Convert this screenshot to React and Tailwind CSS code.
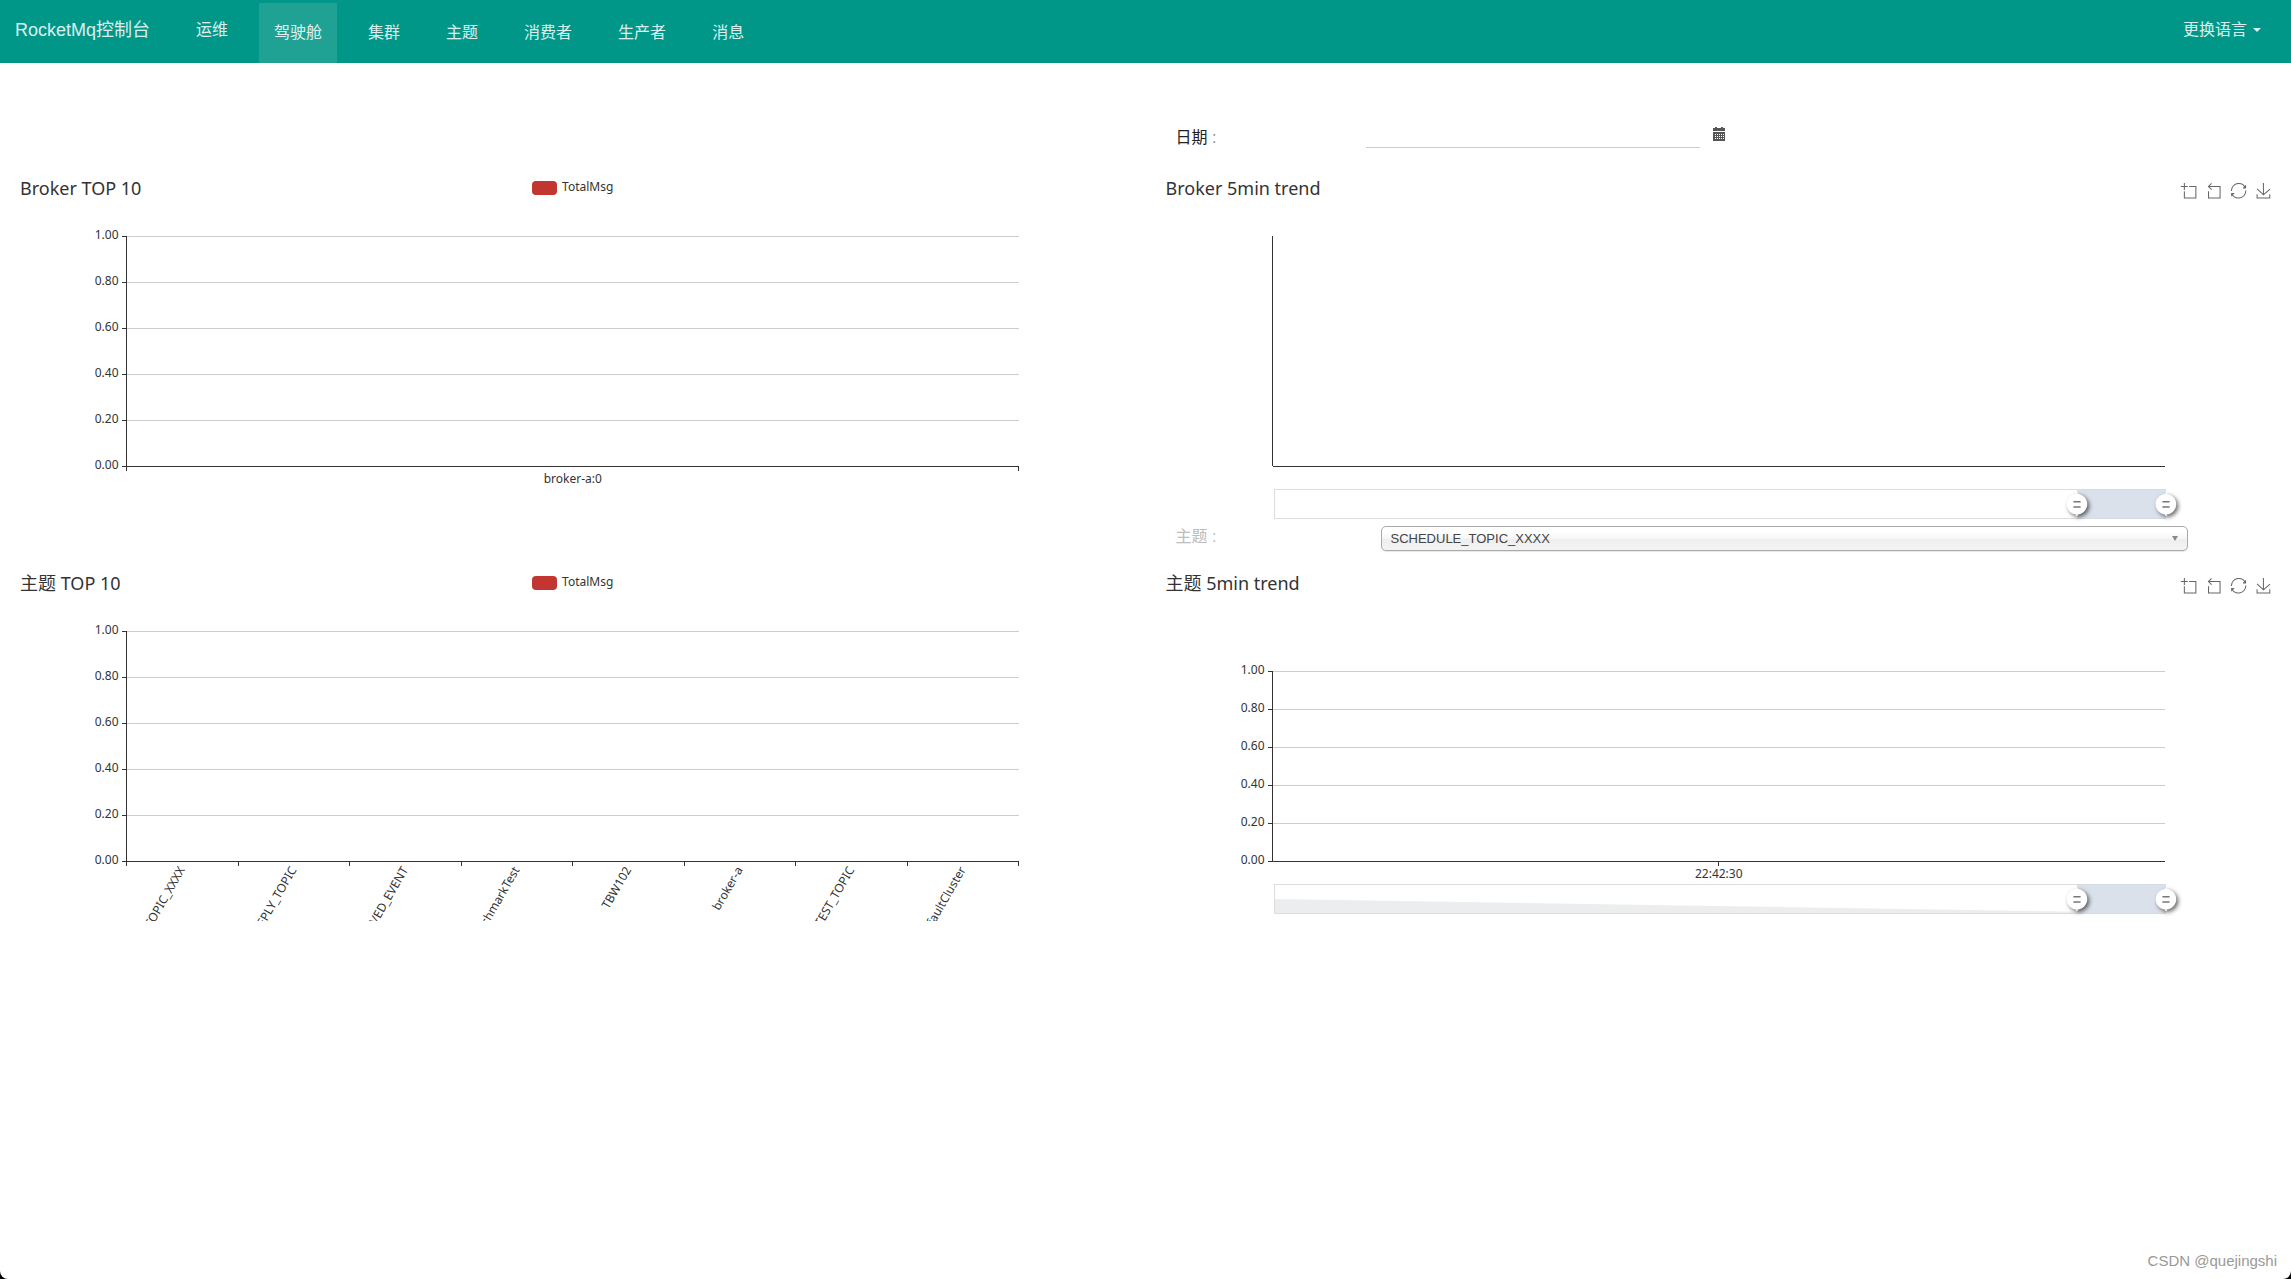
import { useState } from "react";

const NAV = ["驾驶舱", "集群", "主题", "消费者", "生产者", "消息"];
const TOPICS = [
  "SCHEDULE_TOPIC_XXXX",
  "DefaultCluster_REPLY_TOPIC",
  "OFFSET_MOVED_EVENT",
  "BenchmarkTest",
  "TBW102",
  "broker-a",
  "SELF_TEST_TOPIC",
  "DefaultCluster",
];
const TICKS = ["1.00", "0.80", "0.60", "0.40", "0.20", "0.00"];

const TOOLS = [
  ["区域缩放", "M0,13.5h26.9 M13.5,26.9V0 M32.1,13.5H58V58H13.5 V32.1"],
  ["区域缩放还原", "M22,1.4L9.9,13.5l12.3,12.3 M10.3,13.5H54.9v44.6 H10.3v-26"],
  [
    "还原",
    "M47,18.9h9.8V8.7 M56.3,20.1 C52.1,9,40.5,0.6,26.8,2.1C12.6,3.7,1.6,16.2,2.1,30.6 M13,41.1H3.1v10.2 M3.7,39.9c4.2,11.1,15.8,19.5,29.5,18 c14.2-1.6,25.2-14.1,24.7-28.5",
  ],
  [
    "保存为图片",
    "M4.7,22.9L29.3,45.5L54.7,23.4M4.6,43.6L4.6,58L53.8,58L53.8,43.6M29.2,45.1L29.2,0",
  ],
];

function Toolbox() {
  return (
    <div className="flex gap-2.5">
      {TOOLS.map(([label, d]) => (
        <button key={label} type="button" aria-label={label} className="block cursor-pointer">
          <svg viewBox="1 0 57 58" className="block size-[15px] overflow-visible fill-none stroke-[#666] stroke-[4]">
            <path d={d} />
          </svg>
        </button>
      ))}
    </div>
  );
}

function Legend() {
  return (
    <button type="button" className="flex cursor-pointer items-start gap-[5px] text-xs leading-3 text-[#333]">
      <span className="h-3.5 w-[25px] rounded bg-[#c23531]" />
      TotalMsg
    </button>
  );
}

/* Axes and grid lines; top and height are measured inside the 350px canvas. */
function Axes({ top, height, ticks = TICKS, bands = 0, labels = [], rotate = false }) {
  const bottom = top + height;
  const step = height / 5;
  return (
    <svg className="block h-full w-full overflow-hidden fill-[#333] text-xs" aria-hidden="true">
      <g className="stroke-[#ccc]" shapeRendering="crispEdges">
        {ticks.slice(0, -1).map((t, i) => (
          <line key={t} x1="10%" x2="90%" y1={top + i * step} y2={top + i * step} />
        ))}
      </g>
      <g className="stroke-[#333]" shapeRendering="crispEdges">
        <line x1="10%" x2="10%" y1={top} y2={bottom} />
        <line x1="10%" x2="90%" y1={bottom} y2={bottom} />
        {ticks.map((t, i) => (
          <svg key={t} x="10%" y={top + i * step} overflow="visible">
            <line x1="-5" x2="0" y1="0" y2="0" />
          </svg>
        ))}
        {bands > 0 &&
          Array.from({ length: bands + 1 }, (_, i) => {
            const x = `${10 + (80 / bands) * i}%`;
            return <line key={i} x1={x} x2={x} y1={bottom} y2={bottom + 5} />;
          })}
        {!bands && labels.length > 0 && <line x1="50%" x2="50%" y1={bottom} y2={bottom + 5} />}
      </g>
      {ticks.map((t, i) => (
        <svg key={t} x="10%" y={top + i * step} overflow="visible">
          <text x="-8" y="3" textAnchor="end">
            {t}
          </text>
        </svg>
      ))}
      {labels.map((l, i) => (
        <svg key={l} x={`${10 + (80 / labels.length) * (i + 0.5)}%`} y={bottom} overflow="visible">
          {rotate ? (
            <text x="-6" y="7" textAnchor="end" transform="rotate(-60)">
              {l}
            </text>
          ) : (
            <text y="17" textAnchor="middle">
              {l}
            </text>
          )}
        </svg>
      ))}
    </svg>
  );
}

function Handle({ value }) {
  return (
    <svg
      viewBox="0 10 20 22"
      className="pointer-events-none absolute top-[3px] h-6 w-[22px] -translate-x-1/2 overflow-visible drop-shadow-[2px_2px_2px_rgba(0,0,0,0.6)]"
      style={{ left: `${value}%` }}
    >
      <path
        className="fill-white"
        d="M10.7,11.9v-1.3H9.3v1.3c-4.9,0.3-8.8,4.4-8.8,9.4c0,5,3.9,9.1,8.8,9.4v1.3h1.3v-1.3c4.9-0.3,8.8-4.4,8.8-9.4C19.5,16.3,15.6,12.2,10.7,11.9z"
      />
      <path className="fill-[#777]" d="M13.3,24.4H6.7V23h6.6V24.4z M13.3,19.6H6.7v-1.4h6.6V19.6z" />
    </svg>
  );
}

const RANGE =
  "pointer-events-none absolute -left-2.5 top-0 h-full w-[calc(100%+20px)] cursor-ew-resize appearance-none opacity-0 [&::-webkit-slider-thumb]:pointer-events-auto [&::-webkit-slider-thumb]:size-5";

function DataZoom({ name, trend = false }) {
  const [start, setStart] = useState(90);
  const [end, setEnd] = useState(100);
  return (
    <div className="relative h-[30px] w-full">
      <div className="relative h-full w-full overflow-hidden border border-[#ddd]">
        {trend && (
          <svg viewBox="0 0 100 28" preserveAspectRatio="none" className="block h-full w-full">
            <polygon points="0,14 100,28 0,28" className="fill-[#ecedee]" />
          </svg>
        )}
      </div>
      <div
        className="absolute inset-y-0 border-y border-[#d2dbe6] bg-[#dae1eb]"
        style={{ left: `${start}%`, right: `${100 - end}%` }}
      />
      <Handle value={start} />
      <Handle value={end} />
      <input
        type="range"
        aria-label={`${name} start`}
        className={RANGE}
        value={start}
        onChange={(e) => setStart(Math.min(+e.target.value, end))}
      />
      <input
        type="range"
        aria-label={`${name} end`}
        className={RANGE}
        value={end}
        onChange={(e) => setEnd(Math.max(+e.target.value, start))}
      />
    </div>
  );
}

function Chart({ title, legend, toolbox, zoom, children }) {
  return (
    <section className="relative mx-[15px] h-[350px] font-['Noto_Sans','Noto_Sans_CJK_SC',sans-serif]">
      {children}
      <div className="absolute inset-x-0 top-0 grid grid-cols-[1fr_auto_1fr] items-start px-[5px] pt-[5px]">
        <h2 className="text-lg leading-[14px] text-[#333]">{title}</h2>
        <div>{legend && <Legend />}</div>
        <div className="flex justify-end pt-[2px]">{toolbox && <Toolbox />}</div>
      </div>
      {zoom && (
        <div className="absolute bottom-[7px] left-[calc(10%+2px)] right-[calc(10%-2px)]">{zoom}</div>
      )}
    </section>
  );
}

function Header() {
  return (
    <header className="flex h-[63px] items-start justify-between bg-[#009688] px-[15px] text-base leading-6 text-white/85">
      <nav className="flex items-start gap-4">
        <a href="#home" className="pr-[15px] pt-[18px] text-lg leading-6">
          RocketMq控制台
        </a>
        <a href="#ops" className="px-[15px] pt-[18px]">
          运维
        </a>
        {NAV.map((n, i) => (
          <a
            key={n}
            href={`#${n}`}
            className={
              i === 0 ? "mt-[3px] h-[60px] bg-[#1fa193] px-[15px] pt-[18px]" : "mt-[3px] h-[60px] px-[15px] pt-[18px]"
            }
          >
            {n}
          </a>
        ))}
      </nav>
      <button type="button" className="mt-[18px] flex cursor-pointer items-center gap-1.5 pr-[15px] leading-6">
        更换语言
        <span className="border-x-4 border-t-4 border-x-transparent border-t-white/85" />
      </button>
    </header>
  );
}

export default function App() {
  return (
    <div className="min-h-screen bg-black">
      <div className="flex min-h-screen flex-col overflow-hidden rounded-b-lg bg-white font-['Liberation_Sans','Noto_Sans_CJK_SC',sans-serif]">
        <Header />
        <main className="grid grow grid-cols-2 grid-rows-[113px_350px_45px_350px]">
          <div className="col-start-2 flex items-start pl-[30px] pt-[61px]">
            <label htmlFor="date" className="w-[190px] pt-0.5 text-base leading-6 text-[#222]">
              日期 <span className="text-[#888]">:</span>
            </label>
            <input id="date" type="text" className="h-6 w-[30%] border-b border-[#ccc] outline-none" />
            <button type="button" aria-label="选择日期" className="ml-3 mt-[3px] cursor-pointer">
              <svg viewBox="0 0 14 14" className="block size-3.5" shapeRendering="crispEdges">
                <path className="fill-[#555]" d="M1 1h2V0h2v1h4V0h2v1h2v3H1zM1 5h12v9H1z" />
                <path
                  className="stroke-white"
                  strokeDasharray="1 1"
                  d="M3 7.500h9M3 9.500h9M3 11.500h9"
                />
              </svg>
            </button>
          </div>

          <div className="col-start-1">
            <Chart title="Broker TOP 10" legend>
              <Axes top={60} height={230} bands={1} labels={["broker-a:0"]} />
            </Chart>
          </div>
          <Chart title="Broker 5min trend" toolbox zoom={<DataZoom name="Broker 5min trend" />}>
            <Axes top={60} height={230} ticks={[]} />
          </Chart>

          <div className="col-start-2 flex items-start pl-[30px] pr-[103px]">
            <label htmlFor="topic" className="w-[205px] text-base leading-[22px] text-[#bdbdbd]">
              主题 :
            </label>
            <div className="relative grow">
              <select
                id="topic"
                className="block h-[25px] w-full appearance-none rounded-[5px] border border-[#aaa] bg-[linear-gradient(#fff_20%,#f6f6f6_50%,#eee_52%,#f4f4f4_100%)] px-[9px] text-[13px] leading-5 text-[#444] shadow-[0_1px_1px_rgba(0,0,0,0.1)]"
              >
                {TOPICS.map((t) => (
                  <option key={t}>{t}</option>
                ))}
              </select>
              <span className="pointer-events-none absolute right-2.5 top-2.5 border-x-[3px] border-t-[5px] border-x-transparent border-t-[#888]" />
            </div>
          </div>

          <div className="col-start-1">
            <Chart title="主题 TOP 10" legend>
              <Axes top={60} height={230} bands={8} labels={TOPICS} rotate />
            </Chart>
          </div>
          <Chart title="主题 5min trend" toolbox zoom={<DataZoom name="主题 5min trend" trend />}>
            <Axes top={100} height={190} labels={["22:42:30"]} />
          </Chart>
        </main>
        <footer className="px-3.5 pb-1.5 text-right text-[15px] leading-6 text-[#999]">CSDN @quejingshi</footer>
      </div>
    </div>
  );
}
